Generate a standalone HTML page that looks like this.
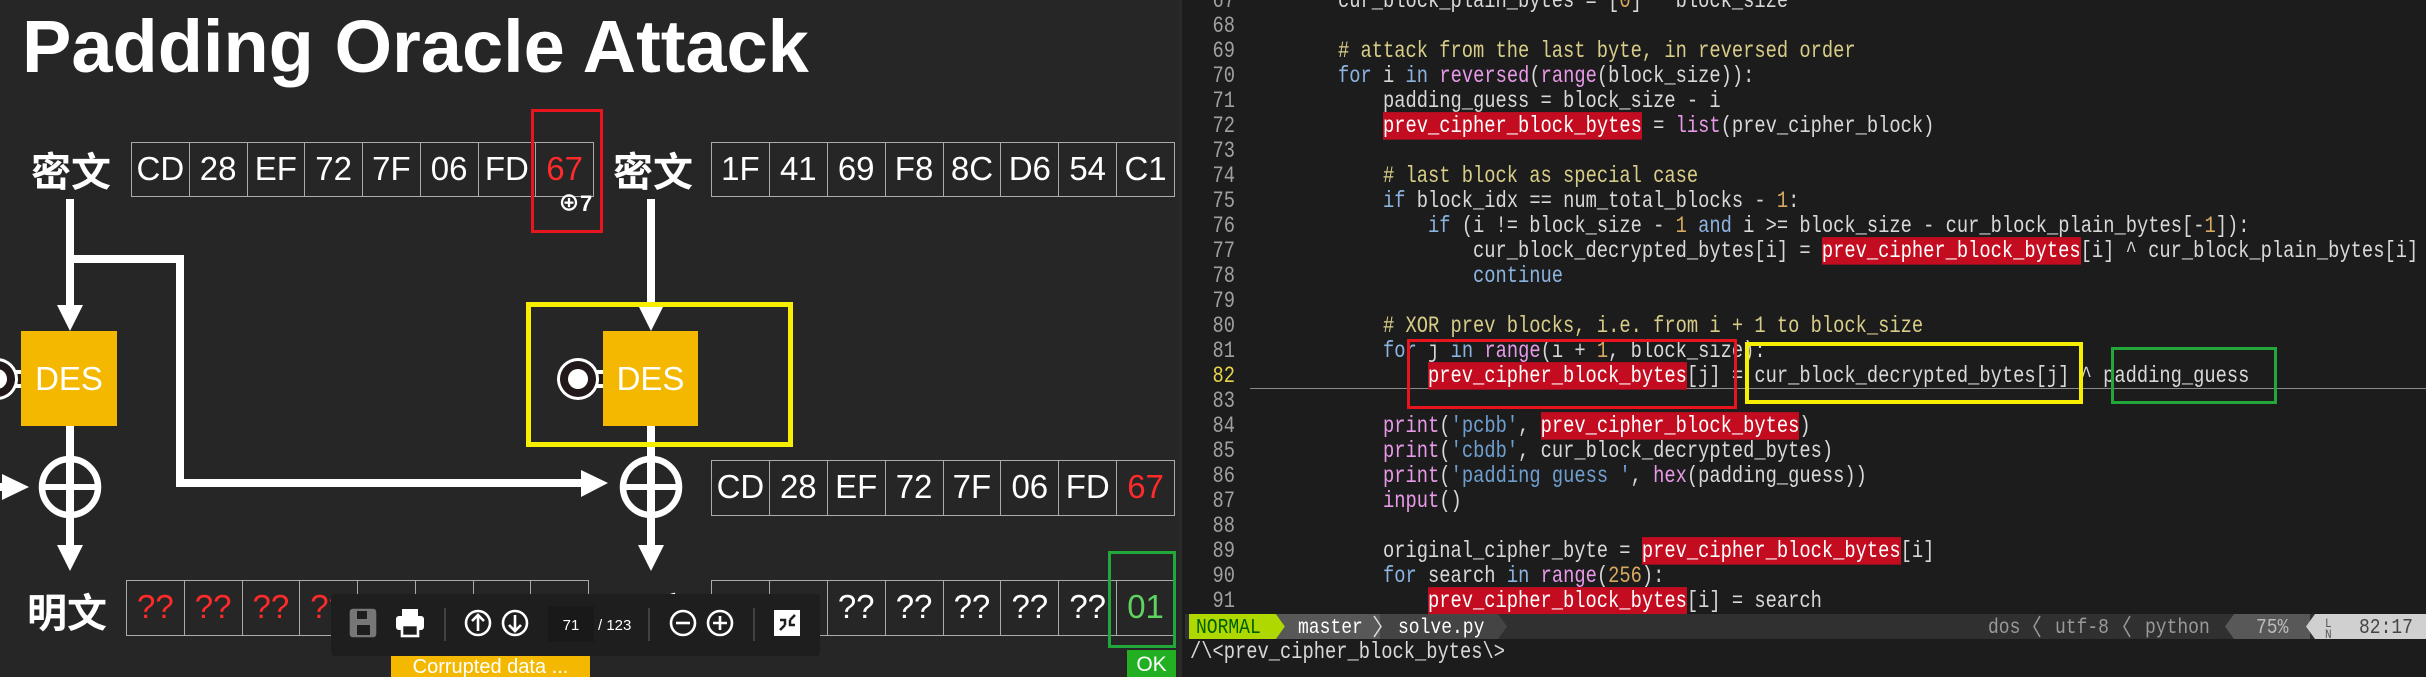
<!DOCTYPE html>
<html><head><meta charset="utf-8"><style>
*{margin:0;padding:0;box-sizing:border-box}
body{width:2426px;height:677px;overflow:hidden;background:#1c1c1c;position:relative;font-family:"Liberation Sans","Noto Sans CJK SC",sans-serif}
#left{position:absolute;left:0;top:0;width:1179px;height:677px;background:#262626;overflow:hidden}
.a{position:absolute}
.row{position:absolute;display:flex;border-top:1.5px solid #aaa;border-bottom:1.5px solid #aaa;border-left:1.5px solid #aaa}
.row div{flex:1;border-right:1.5px solid #aaa;color:#fff;font-size:33px;text-align:center;line-height:52px;white-space:nowrap}
.r{color:#ff2a2a!important}
.g{color:#5fd35f!important}
.cjk{position:absolute;color:#fff;font-family:"Noto Sans CJK SC",sans-serif;font-weight:bold;font-size:40px;line-height:40px}
.des{position:absolute;background:#f5b800;color:#fff;font-size:33px;display:flex;align-items:center;justify-content:center}
#code{position:absolute;left:1179px;top:0;width:1247px;height:677px;background:#1c1c1c;border-left:3px solid #2a2a2a}
.ln{position:absolute;left:0;width:1235px;height:25px;font-family:"Liberation Mono",monospace;font-size:18.75px;line-height:25px;color:#d8d8d8;white-space:pre}
.ln span.n{position:absolute;right:0;color:#a0a0a0;transform:scaleY(1.25)}
.ln span.t{position:absolute;left:1248px;transform:scaleY(1.25);transform-origin:0 50%}
.c{color:#d8cd88}.k{color:#8cb4e0}.b{color:#e89ae8}.s{color:#6f9fd0}.o{color:#d9a95f}
.h{background:#c40c20;color:#fff}
</style></head><body>
<div id="left">
<div class="a" style="left:22px;top:9px;font-size:74px;font-weight:bold;color:#fff;line-height:75px;white-space:nowrap">Padding Oracle Attack</div>
<svg class="a" style="left:0;top:0" width="1179" height="677">
<g fill="#fff" stroke="none">
<rect x="66" y="199" width="8" height="110"/>
<polygon points="57,305 83,305 70,331"/>
<path d="M66 255 H184 V479 H585 V487 H176 V263 H66Z"/>
<polygon points="581,470 608,483 581,497"/>
<rect x="66" y="426" width="8" height="124"/>
<polygon points="57,545 83,545 70,571"/>
<rect x="0" y="483" width="8" height="8"/>
<polygon points="2,474 29,487 2,500"/>
<rect x="647" y="199" width="8" height="110"/>
<polygon points="638,305 664,305 651,331"/>
<rect x="647" y="426" width="8" height="124"/>
<polygon points="638,545 664,545 651,571"/>
<rect x="43" y="484" width="54" height="6"/>
<rect x="624" y="484" width="54" height="6"/>
</g>
<circle cx="70" cy="487" r="28" fill="none" stroke="#fff" stroke-width="6.5"/>
<circle cx="651" cy="487" r="28" fill="none" stroke="#fff" stroke-width="6.5"/>
<g>
<rect x="585" y="370" width="22" height="18" fill="#fff"/><rect x="585" y="374" width="22" height="10" fill="#221a1a"/>
<circle cx="578" cy="379" r="21" fill="#fff"/><circle cx="578" cy="379" r="18" fill="#221a1a"/><circle cx="578" cy="379" r="10" fill="#fff"/>
<rect x="4" y="370" width="20" height="18" fill="#fff"/><rect x="4" y="374" width="20" height="10" fill="#221a1a"/>
<circle cx="-3" cy="379" r="21" fill="#fff"/><circle cx="-3" cy="379" r="18" fill="#221a1a"/><circle cx="-3" cy="379" r="10" fill="#fff"/>
</g>
</svg>
<div class="des" style="left:21px;top:331px;width:96px;height:95px">DES</div>
<div class="des" style="left:603px;top:331px;width:95px;height:95px">DES</div>
<div class="cjk" style="left:31px;top:149px">密文</div>
<div class="cjk" style="left:613px;top:149px">密文</div>
<div class="cjk" style="left:27px;top:590px">明文</div>
<div class="cjk" style="left:613px;top:590px">明文</div>
<div class="row" style="left:131px;top:142px;width:463px;height:55px"><div>CD</div><div>28</div><div>EF</div><div>72</div><div>7F</div><div>06</div><div>FD</div><div class="r">67</div></div>
<div class="row" style="left:711px;top:142px;width:464px;height:55px"><div>1F</div><div>41</div><div>69</div><div>F8</div><div>8C</div><div>D6</div><div>54</div><div>C1</div></div>
<div class="row" style="left:711px;top:460px;width:464px;height:56px"><div>CD</div><div>28</div><div>EF</div><div>72</div><div>7F</div><div>06</div><div>FD</div><div class="r">67</div></div>
<div class="row" style="left:126px;top:580px;width:463px;height:56px"><div class="r">??</div><div class="r">??</div><div class="r">??</div><div class="r">??</div><div class="r">??</div><div class="r">??</div><div class="r">??</div><div class="r">??</div></div>
<div class="row" style="left:711px;top:580px;width:464px;height:56px"><div></div><div></div><div>??</div><div>??</div><div>??</div><div>??</div><div>??</div><div class="g">01</div></div>
<div class="a" style="left:558px;top:193px;color:#fff;font-size:22px;font-weight:bold;line-height:22px">⊕7</div>
<div class="a" style="left:531px;top:109px;width:72px;height:124px;border:3px solid #e8141e"></div>
<div class="a" style="left:526px;top:302px;width:267px;height:145px;border:5px solid #f8ee00"></div>
<div class="a" style="left:1108px;top:551px;width:68px;height:97px;border:3px solid #22a83a"></div>
<div class="a" style="left:1127px;top:650px;width:49px;height:27px;background:#22b022;color:#fff;font-size:21px;text-align:center;line-height:30px">OK</div>
<div class="a" style="left:331px;top:594px;width:489px;height:62px;background:#1e1e1e;border-radius:4px"></div>
<svg class="a" style="left:331px;top:594px" width="489" height="62">
<g fill="none" stroke="#fff" stroke-width="2.6">
<rect x="20" y="16" width="24" height="26" rx="2" stroke="#777" fill="#777"/>
<rect x="26" y="17" width="10" height="8" fill="#1e1e1e" stroke="none"/>
<rect x="26" y="31" width="13" height="10" fill="#1e1e1e" stroke="none"/>
<rect x="71" y="15" width="16" height="7" fill="#fff" stroke="none"/>
<rect x="65" y="22" width="28" height="14" rx="3" fill="#fff" stroke="none"/>
<rect x="71" y="31" width="16" height="11" fill="#1e1e1e" stroke="#fff"/>
<line x1="114" y1="14" x2="114" y2="47" stroke="#555" stroke-width="1.3"/>
<circle cx="147" cy="29" r="12"/><path d="M147 37V21M141 27l6-6 6 6"/>
<circle cx="184" cy="29" r="12"/><path d="M184 21V37M178 31l6 6 6-6"/>
<line x1="318" y1="14" x2="318" y2="47" stroke="#555" stroke-width="1.3"/>
<circle cx="352" cy="29" r="12"/><path d="M345 29h14"/>
<circle cx="389" cy="29" r="12"/><path d="M382 29h14M389 22v14"/>
<line x1="423" y1="14" x2="423" y2="47" stroke="#555" stroke-width="1.3"/>
<rect x="443" y="16" width="26" height="26" fill="#fff" stroke="none"/>
<path d="M449 36l5-5M464 21l-5 5M454 31v-5h-5M459 26v5h5" stroke="#1e1e1e" stroke-width="2.5"/>
</g>
<rect x="217" y="12" width="46" height="36" fill="#191919"/>
<text x="240" y="36" fill="#fff" font-size="15" text-anchor="middle" font-family="Liberation Sans">71</text>
<text x="267" y="36" fill="#fff" font-size="15" font-family="Liberation Sans">/ 123</text>
</svg>
<div class="a" style="left:391px;top:656px;width:199px;height:21px;background:#f5b800;color:#fff;font-size:20px;line-height:23px;text-align:center">Corrupted data ...</div>
</div>
<div id="code">
<div class="a" style="left:68px;top:388px;width:1180px;height:1px;background:#8a8a8a"></div>
</div>
<div class="a" style="left:1179px;top:0;width:1247px;height:677px">
<div style="position:absolute;left:-1179px;top:0">
<div class="ln" style="top:-11px"><span class="n">67</span><span class="t">        cur_block_plain_bytes = [<span class="o">0</span>] * block_size</span></div>
<div class="ln" style="top:14px"><span class="n">68</span></div>
<div class="ln" style="top:39px"><span class="n">69</span><span class="t">        <span class="c"># attack from the last byte, in reversed order</span></span></div>
<div class="ln" style="top:64px"><span class="n">70</span><span class="t">        <span class="k">for</span> i <span class="k">in</span> <span class="b">reversed</span>(<span class="b">range</span>(block_size)):</span></div>
<div class="ln" style="top:89px"><span class="n">71</span><span class="t">            padding_guess = block_size - i</span></div>
<div class="ln" style="top:114px"><span class="n">72</span><span class="t">            <span class="h">prev_cipher_block_bytes</span> = <span class="b">list</span>(prev_cipher_block)</span></div>
<div class="ln" style="top:139px"><span class="n">73</span></div>
<div class="ln" style="top:164px"><span class="n">74</span><span class="t">            <span class="c"># last block as special case</span></span></div>
<div class="ln" style="top:189px"><span class="n">75</span><span class="t">            <span class="k">if</span> block_idx == num_total_blocks - <span class="o">1</span>:</span></div>
<div class="ln" style="top:214px"><span class="n">76</span><span class="t">                <span class="k">if</span> (i != block_size - <span class="o">1</span> <span class="k">and</span> i &gt;= block_size - cur_block_plain_bytes[-<span class="o">1</span>]):</span></div>
<div class="ln" style="top:239px"><span class="n">77</span><span class="t">                    cur_block_decrypted_bytes[i] = <span class="h">prev_cipher_block_bytes</span>[i] ^ cur_block_plain_bytes[i]</span></div>
<div class="ln" style="top:264px"><span class="n">78</span><span class="t">                    <span class="k">continue</span></span></div>
<div class="ln" style="top:289px"><span class="n">79</span></div>
<div class="ln" style="top:314px"><span class="n">80</span><span class="t">            <span class="c"># XOR prev blocks, i.e. from i + 1 to block_size</span></span></div>
<div class="ln" style="top:339px"><span class="n">81</span><span class="t">            <span class="k">for</span> j <span class="k">in</span> <span class="b">range</span>(i + <span class="o">1</span>, block_size):</span></div>
<div class="ln" style="top:364px"><span class="n" style="color:#e8d44a">82</span><span class="t">                <span class="h">prev_cipher_block_bytes</span>[j] = cur_block_decrypted_bytes[j] ^ padding_guess</span></div>
<div class="ln" style="top:389px"><span class="n">83</span></div>
<div class="ln" style="top:414px"><span class="n">84</span><span class="t">            <span class="b">print</span>(<span class="s">'pcbb'</span>, <span class="h">prev_cipher_block_bytes</span>)</span></div>
<div class="ln" style="top:439px"><span class="n">85</span><span class="t">            <span class="b">print</span>(<span class="s">'cbdb'</span>, cur_block_decrypted_bytes)</span></div>
<div class="ln" style="top:464px"><span class="n">86</span><span class="t">            <span class="b">print</span>(<span class="s">'padding guess '</span>, <span class="b">hex</span>(padding_guess))</span></div>
<div class="ln" style="top:489px"><span class="n">87</span><span class="t">            <span class="b">input</span>()</span></div>
<div class="ln" style="top:514px"><span class="n">88</span></div>
<div class="ln" style="top:539px"><span class="n">89</span><span class="t">            original_cipher_byte = <span class="h">prev_cipher_block_bytes</span>[i]</span></div>
<div class="ln" style="top:564px"><span class="n">90</span><span class="t">            <span class="k">for</span> search <span class="k">in</span> <span class="b">range</span>(<span class="o">256</span>):</span></div>
<div class="ln" style="top:589px"><span class="n">91</span><span class="t">                <span class="h">prev_cipher_block_bytes</span>[i] = search</span></div>
</div>
</div>
<div class="a" style="left:1407px;top:339px;width:330px;height:70px;border:3px solid #e8141e"></div>
<div class="a" style="left:1745px;top:342px;width:338px;height:62px;border:4px solid #f8ee00"></div>
<div class="a" style="left:2111px;top:347px;width:166px;height:57px;border:3px solid #22a83a"></div>
<svg class="a" style="left:1185px;top:614px" width="1241" height="25">
<rect width="1241" height="25" fill="#303030"/>
<polygon points="4,0 91,0 100,12.5 91,25 4,25" fill="#afd700"/>
<polygon points="91,0 195,0 195,25 91,25 100,12.5" fill="#585858"/>
<polygon points="195,0 313,0 322,12.5 313,25 195,25" fill="#444"/>
<polyline points="189,2 196,12.5 189,23" fill="none" stroke="#ddd" stroke-width="1.5"/>
<polyline points="855,2 849,12.5 855,23" fill="none" stroke="#999" stroke-width="1.5"/>
<polyline points="945,2 939,12.5 945,23" fill="none" stroke="#999" stroke-width="1.5"/>
<polygon points="1049,0 1125,0 1125,25 1049,25 1040,12.5" fill="#585858"/>
<polygon points="1130,0 1241,0 1241,25 1130,25 1121,12.5" fill="#d0d0d0"/>
<g font-family="Liberation Mono" font-size="18" transform="scale(1,1.2)">
<text x="11" y="16" fill="#005f00">NORMAL</text>
<text x="113" y="16" fill="#fff">master</text>
<text x="213" y="16" fill="#fff">solve.py</text>
<text x="803" y="16" fill="#999">dos</text>
<text x="870" y="16" fill="#999">utf-8</text>
<text x="960" y="16" fill="#999">python</text>
<text x="1071" y="16" fill="#bbb">75%</text>
<text x="1140" y="11" fill="#555" font-size="11">L</text>
<text x="1140" y="20" fill="#555" font-size="11">N</text>
<text x="1174" y="16" fill="#444">82:17</text>
</g>
</svg>
<div class="a" style="left:1190px;top:640px;font-family:'Liberation Mono',monospace;font-size:18.75px;line-height:25px;color:#d8d8d8;white-space:pre;transform:scaleY(1.25);transform-origin:0 50%">/\&lt;prev_cipher_block_bytes\&gt;</div>
</body></html>
